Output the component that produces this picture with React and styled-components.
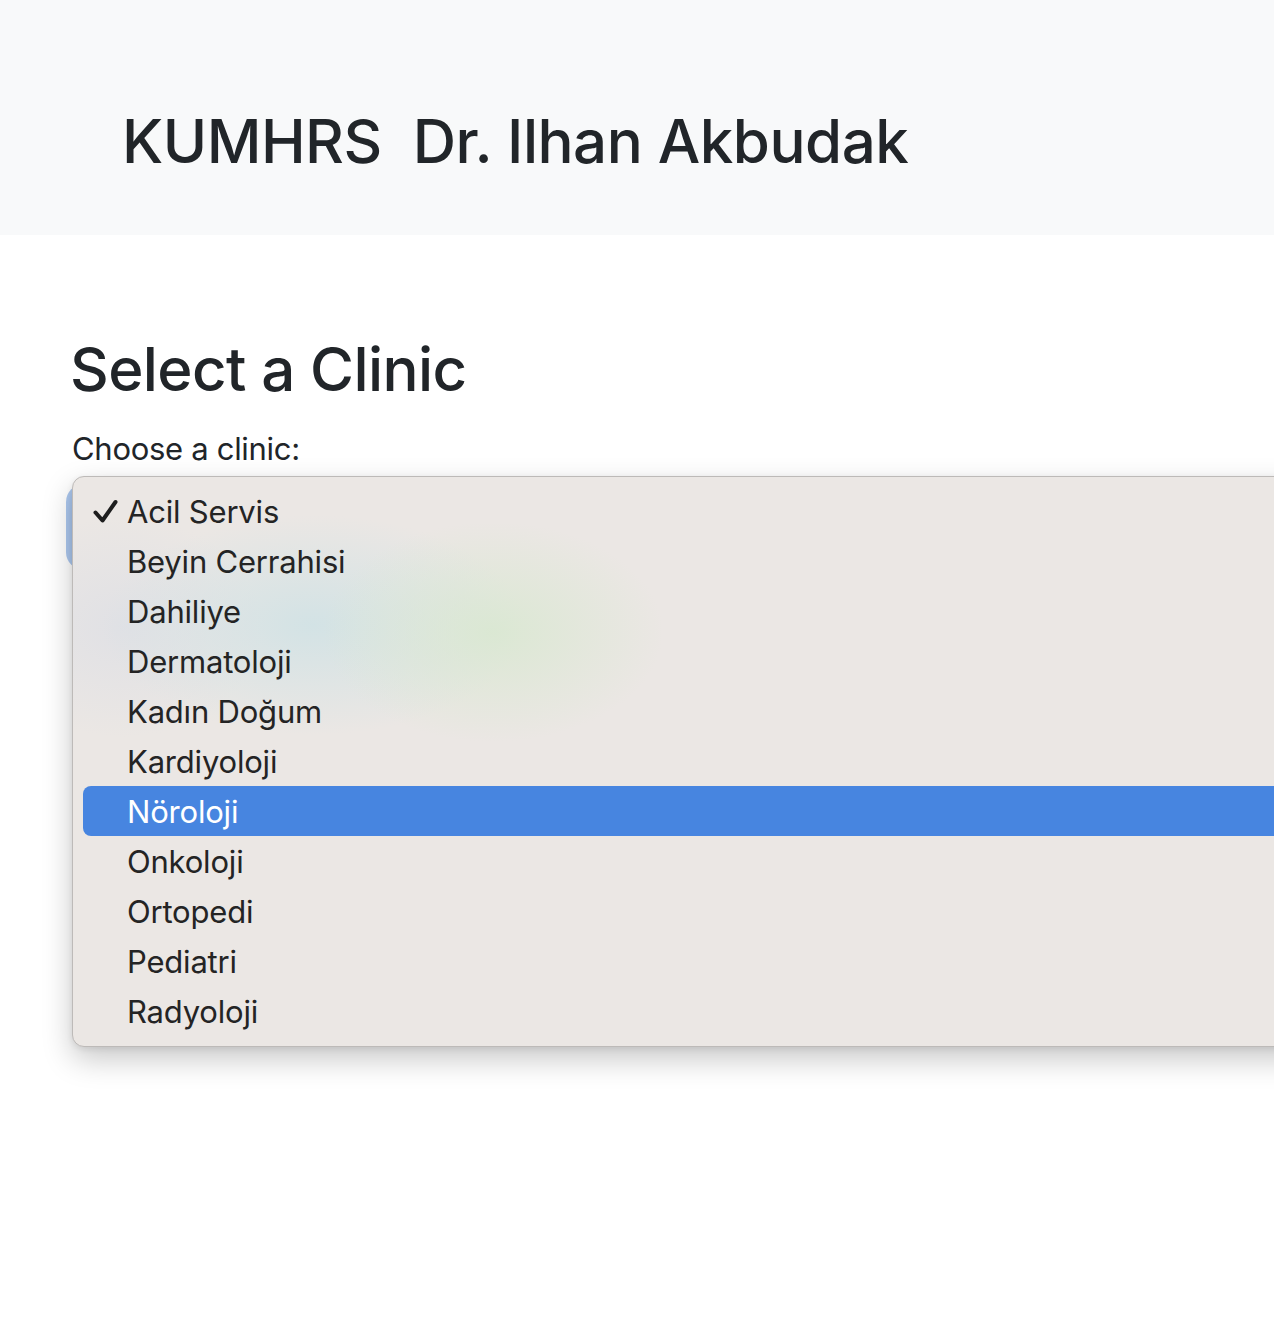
import React from "react";
import styled, { createGlobalStyle } from "styled-components";

const GlobalStyle = createGlobalStyle`
  html, body {
    margin: 0;
    padding: 0;
    background: #ffffff;
  }
  body {
    font-family: Inter, "Noto Sans", "Liberation Sans", sans-serif;
    color: #212529;
  }
`;

const clinics = [
  "Acil Servis",
  "Beyin Cerrahisi",
  "Dahiliye",
  "Dermatoloji",
  "Kadın Doğum",
  "Kardiyoloji",
  "Nöroloji",
  "Onkoloji",
  "Ortopedi",
  "Pediatri",
  "Radyoloji",
];

const Page = styled.div`
  min-height: 100vh;
  overflow: hidden;
`;

const Header = styled.header`
  height: 235px;
  box-sizing: border-box;
  background: #f8f9fa;
  padding: 105px 0 0 122px;
`;

const Brand = styled.h1`
  margin: 0;
  font-size: 60px;
  line-height: 1.2;
  font-weight: 500;
  letter-spacing: -0.5px;
  white-space: pre;
  color: #212529;
`;

const Main = styled.main`
  padding: 98px 0 0 72px;
`;

const Title = styled.h2`
  margin: 0 0 0 -2px;
  font-size: 60px;
  line-height: 1.2;
  font-weight: 500;
  letter-spacing: -0.6px;
  color: #212529;
`;

const Label = styled.label`
  display: block;
  margin-top: 20px;
  font-size: 31px;
  line-height: 48px;
  color: #212529;
  letter-spacing: -0.3px;
`;

const SelectWrap = styled.div`
  position: relative;
  margin-top: 17px;
`;

const SelectBox = styled.div`
  width: 1300px;
  height: 72px;
  border-radius: 12px;
  background: #fff;
  border: 1px solid #86b7fe;
  box-shadow: 0 0 0 6px #abc7ee;
`;

const Menu = styled.ul`
  position: absolute;
  top: -14px;
  left: 0;
  width: 1300px;
  margin: 0;
  padding: 9px 0 10px;
  list-style: none;
  border-radius: 12px;
  border: 1px solid #bdbab8;
  background:
    radial-gradient(ellipse 170px 110px at 420px 155px, rgba(216, 232, 208, 0.85), rgba(216, 232, 208, 0) 100%),
    radial-gradient(ellipse 210px 110px at 240px 148px, rgba(208, 226, 229, 0.9), rgba(208, 226, 229, 0) 100%),
    radial-gradient(ellipse 140px 110px at 50px 150px, rgba(223, 224, 229, 0.9), rgba(223, 224, 229, 0) 100%),
    #ebe7e4;
  box-shadow: 0 12px 30px rgba(0, 0, 0, 0.22), 0 2px 6px rgba(0, 0, 0, 0.08);
`;

const Item = styled.li`
  position: relative;
  height: 50px;
  margin: 0 0 0 10px;
  padding-left: 44px;
  display: flex;
  align-items: center;
  font-size: 31px;
  letter-spacing: -0.2px;
  border-radius: 8px 0 0 8px;
  color: ${(p) => (p.$active ? "#ffffff" : "#242424")};
  background: ${(p) => (p.$active ? "#4785e0" : "transparent")};
`;

const Check = styled.svg`
  position: absolute;
  left: 10px;
  top: 13px;
  width: 26px;
  height: 26px;
`;

export default function App() {
  return (
    <Page>
      <GlobalStyle />
      <Header>
        <Brand>KUMHRS  Dr. Ilhan Akbudak</Brand>
      </Header>
      <Main>
        <Title>Select a Clinic</Title>
        <Label>Choose a clinic:</Label>
        <SelectWrap>
          <SelectBox />
          <Menu>
            {clinics.map((c, i) => (
              <Item key={c} $active={c === "Nöroloji"}>
                {i === 0 && (
                  <Check viewBox="0 0 26 26">
                    <path
                      d="M2.5 13.5 L9.5 21.5 L22.5 3"
                      fill="none"
                      stroke="#1e1e1e"
                      strokeWidth="4"
                      strokeLinecap="round"
                      strokeLinejoin="round"
                    />
                  </Check>
                )}
                {c}
              </Item>
            ))}
          </Menu>
        </SelectWrap>
      </Main>
    </Page>
  );
}
